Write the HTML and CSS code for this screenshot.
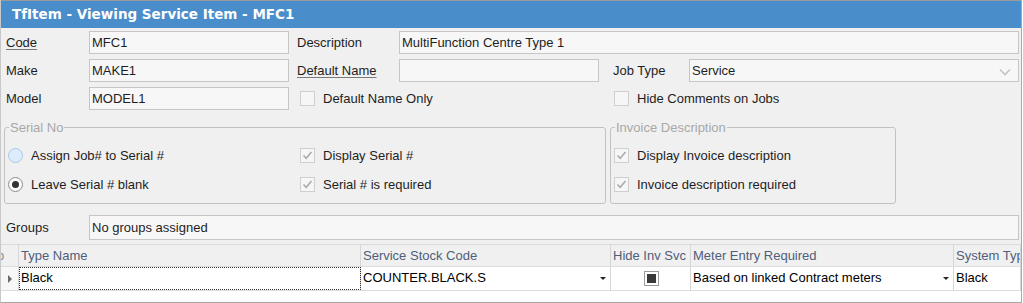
FILE: index.html
```html
<!DOCTYPE html>
<html>
<head lang="en">
<meta charset="UTF-8">
<title>TfItem - Viewing Service Item - MFC1</title>
<link rel="stylesheet" href="styles.css">
</head>
<body>
<div class="window">
  <div class="titlebar">TfItem - Viewing Service Item - MFC1</div>

  <div class="form">
    <div class="row">
      <span class="label link">Code</span>
      <span class="edit short">MFC1</span>
      <span class="label mid">Description</span>
      <span class="edit grow">MultiFunction Centre Type 1</span>
    </div>
    <div class="row">
      <span class="label">Make</span>
      <span class="edit short">MAKE1</span>
      <span class="label mid link">Default Name</span>
      <span class="edit short"></span>
      <span class="label job">Job Type</span>
      <span class="edit combo">Service
        <svg class="chev" width="12" height="8" viewBox="0 0 12 8"><path d="M1 1.5 L6 6.5 L11 1.5" fill="none" stroke="#c4c4c4" stroke-width="1.6"/></svg>
      </span>
    </div>
    <div class="row">
      <span class="label">Model</span>
      <span class="edit short">MODEL1</span>
      <span class="check first"><span class="box"></span>Default Name Only</span>
      <span class="check second"><span class="box"></span>Hide Comments on Jobs</span>
    </div>

    <div class="groups">
      <fieldset class="serial">
        <legend>Serial No</legend>
        <div class="cols">
          <div class="col radios">
            <div class="opt"><span class="radio hover"></span>Assign Job# to Serial #</div>
            <div class="opt"><span class="radio on"></span>Leave Serial # blank</div>
          </div>
          <div class="col checks">
            <div class="opt"><span class="box ticked"><svg width="13" height="13" viewBox="0 0 13 13"><path d="M2.5 6.5 L5.2 9.3 L10.5 3" fill="none" stroke="#a9a9a9" stroke-width="1.5"/></svg></span>Display Serial #</div>
            <div class="opt"><span class="box ticked"><svg width="13" height="13" viewBox="0 0 13 13"><path d="M2.5 6.5 L5.2 9.3 L10.5 3" fill="none" stroke="#a9a9a9" stroke-width="1.5"/></svg></span>Serial # is required</div>
          </div>
        </div>
      </fieldset>
      <fieldset class="invoice">
        <legend>Invoice Description</legend>
        <div class="col">
          <div class="opt"><span class="box ticked"><svg width="13" height="13" viewBox="0 0 13 13"><path d="M2.5 6.5 L5.2 9.3 L10.5 3" fill="none" stroke="#a9a9a9" stroke-width="1.5"/></svg></span>Display Invoice description</div>
          <div class="opt"><span class="box ticked"><svg width="13" height="13" viewBox="0 0 13 13"><path d="M2.5 6.5 L5.2 9.3 L10.5 3" fill="none" stroke="#a9a9a9" stroke-width="1.5"/></svg></span>Invoice description required</div>
        </div>
      </fieldset>
    </div>

    <div class="row grouprow">
      <span class="label">Groups</span>
      <span class="edit grow tall">No groups assigned</span>
    </div>
  </div>

  <div class="grid">
    <div class="ghead">
      <div class="ind">o</div>
      <div class="hcell">Type Name</div>
      <div class="hcell">Service Stock Code</div>
      <div class="hcell">Hide Inv Svc</div>
      <div class="hcell">Meter Entry Required</div>
      <div class="hcell">System Type</div>
    </div>
    <div class="grow-row">
      <div class="ind"><span class="tri"></span></div>
      <div class="cell focus">Black</div>
      <div class="cell drop">COUNTER.BLACK.S<span class="arrow"></span></div>
      <div class="cell centre"><span class="gbox"><span class="fill"></span></span></div>
      <div class="cell drop">Based on linked Contract meters<span class="arrow"></span></div>
      <div class="cell">Black</div>
    </div>
  </div>
</div>
</body>
</html>
```

FILE: styles.css
```css
body {
  margin: 0;
  font-family: "Liberation Sans", Arial, sans-serif;
  font-size: 13px;
  color: #1e1e1e;
  background: #ffffff;
}

.window {
  width: 1020px;
  height: 302px;
  display: flex;
  flex-direction: column;
  background: #f0f0f0;
  border-right: 1px solid #a9a9a9;
  border-bottom: 1px solid #a9a9a9;
  border-left: 1px solid #c8c8c8;
  overflow: hidden;
}

.titlebar {
  height: 27px;
  line-height: 27px;
  flex: none;
  border-top: 1px solid #9a9a9a;
  background: #4a8dcb;
  color: #ffffff;
  font-family: "DejaVu Sans", Verdana, sans-serif;
  font-weight: bold;
  font-size: 13.5px;
  padding-left: 11px;
}

.form {
  padding: 3px 2px 0 0;
  flex: none;
}

.row {
  display: flex;
  align-items: center;
  height: 23px;
  margin-bottom: 5px;
  padding-left: 5px;
}

.label {
  width: 83px;
  flex: none;
}
.label.mid {
  width: 102px;
  margin-left: 8px;
}
.label.job {
  width: 76px;
  margin-left: 14px;
}
.link {
  text-decoration: underline;
  text-decoration-color: #7a7a7a;
  text-underline-offset: 2px;
}

.edit {
  box-sizing: border-box;
  height: 23px;
  line-height: 21px;
  border: 1px solid #c6c6c6;
  background: #f7f7f7;
  padding-left: 2px;
  flex: none;
  position: relative;
  white-space: nowrap;
}
.edit.short {
  width: 200px;
}
.edit.grow {
  flex: 1;
}
.edit.combo {
  width: 330px;
}
.edit.tall {
  height: 25px;
  line-height: 23px;
}
.chev {
  position: absolute;
  right: 7px;
  top: 8px;
}

.check {
  display: flex;
  align-items: center;
}
.check.first {
  margin-left: 11px;
  width: 314px;
}
.box {
  box-sizing: border-box;
  width: 15px;
  height: 15px;
  border: 1px solid #cfcfcf;
  background: #f6f6f6;
  margin-right: 8px;
  flex: none;
  display: flex;
  align-items: center;
  justify-content: center;
}

.groups {
  display: flex;
  padding-left: 3px;
  margin-top: 10px;
  gap: 4px;
}
fieldset {
  margin: 0;
  padding: 0 0 0 3px;
  border: 1px solid #c2c2c2;
  border-radius: 3px;
  height: 82px;
  box-sizing: content-box;
}
fieldset.serial {
  width: 597px;
}
fieldset.invoice {
  width: 281px;
}
legend {
  color: #a8a8a8;
  padding: 0 1px;
  margin-left: 1px;
  line-height: 15px;
}
.cols {
  display: flex;
}
.col {
  padding-top: 6px;
}
.col.radios {
  width: 292px;
}
.opt {
  display: flex;
  align-items: center;
  height: 29px;
}
.radio {
  box-sizing: border-box;
  width: 15px;
  height: 15px;
  border-radius: 50%;
  border: 1px solid #8c8c8c;
  background: #fdfdfd;
  margin-right: 8px;
  display: flex;
  align-items: center;
  justify-content: center;
}
.radio.hover {
  border-color: #a9c9e8;
  background: #dcecfc;
}
.radio.on::after {
  content: "";
  width: 7px;
  height: 7px;
  border-radius: 50%;
  background: #333333;
}

.grouprow {
  margin-top: 11px;
  margin-bottom: 4px;
  height: 25px;
}

.grid {
  flex: 1;
  border-top: 1px solid #dadada;
  background: #ffffff;
}
.ghead,
.grow-row {
  display: grid;
  grid-template-columns: 18px 342px 250px 80px 263px 1fr;
}
.ghead {
  height: 21px;
  line-height: 21px;
  color: #4f5e7b;
  background: #f0f0f0;
}
.grow-row {
  height: 23px;
  line-height: 21px;
  background: #ffffff;
  border-top: 1px solid #dcdcdc;
  border-bottom: 1px solid #dcdcdc;
}
.ind {
  border-right: 1px solid #d6d6d6;
  overflow: hidden;
  text-indent: -4px;
  color: #8a8a8a;
  display: flex;
  align-items: center;
}
.grow-row .ind {
  background: #f7f7f7;
}
.hcell,
.cell {
  border-right: 1px solid #d6d6d6;
  padding-left: 2px;
  white-space: nowrap;
  overflow: hidden;
  position: relative;
}
.cell {
  color: #000000;
}
.focus {
  outline: 1px dotted #333333;
  outline-offset: -1px;
}
.tri {
  width: 0;
  height: 0;
  border-top: 4px solid transparent;
  border-bottom: 4px solid transparent;
  border-left: 4px solid #6a6a6a;
  margin-left: 7px;
}
.arrow {
  position: absolute;
  right: 4px;
  top: 10px;
  width: 0;
  height: 0;
  border-left: 3px solid transparent;
  border-right: 3px solid transparent;
  border-top: 3px solid #222222;
}
.centre {
  display: flex;
  align-items: center;
  justify-content: center;
}
.gbox {
  box-sizing: border-box;
  width: 15px;
  height: 15px;
  border: 1px solid #9a9a9a;
  background: #ffffff;
  display: flex;
  align-items: center;
  justify-content: center;
}
.fill {
  width: 9px;
  height: 9px;
  background: #3a3a3a;
}
```
